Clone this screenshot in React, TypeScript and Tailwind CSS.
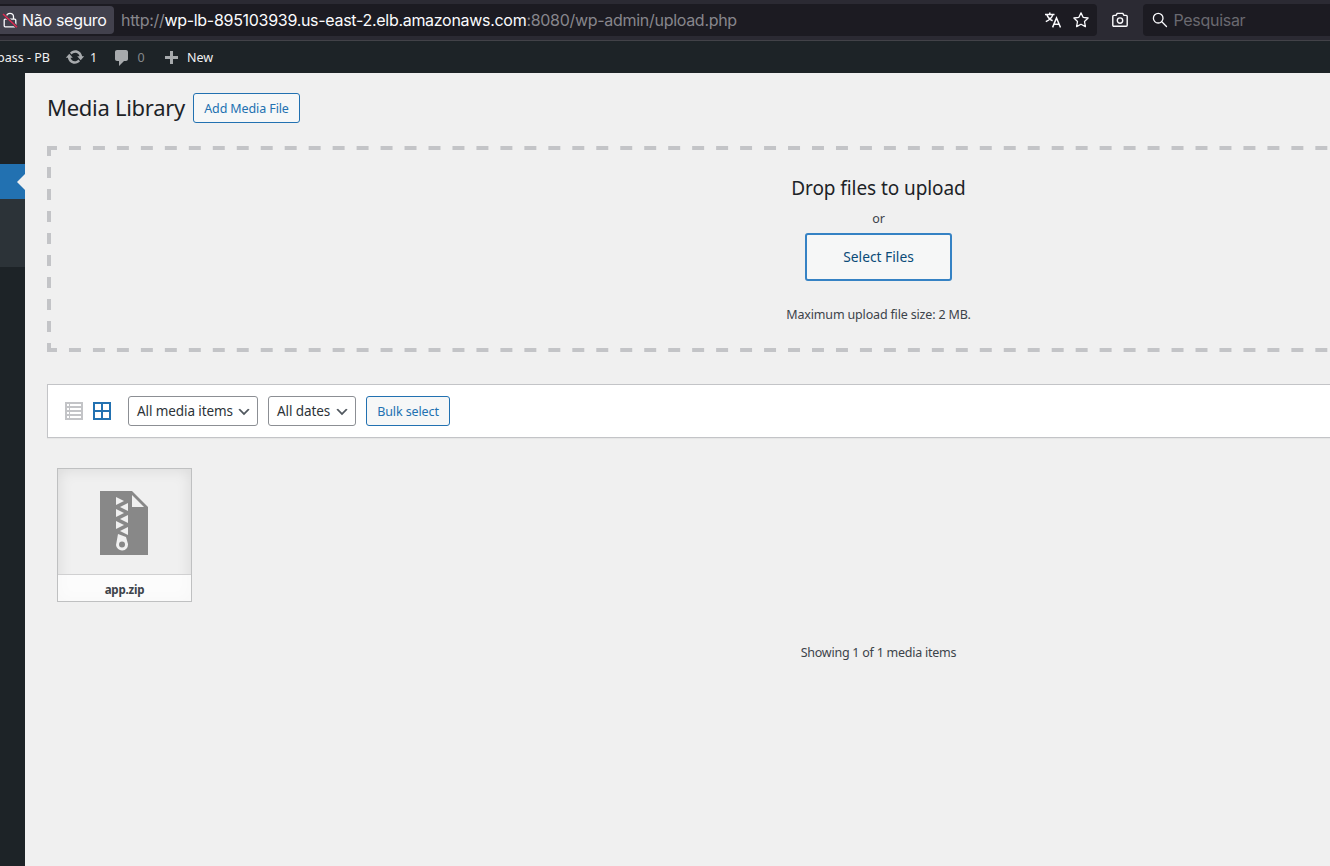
import type { ReactNode } from "react";

function Chevron() {
  return (
    <svg className="mt-[2px] size-4 shrink-0" viewBox="0 0 20 20">
      <path d="M5 6l5 5 5-5 2 1-7 7-7-7 2-1z" fill="#50575e" />
    </svg>
  );
}

function FilterSelect({ label, className }: { label: string; className: string }) {
  return (
    <div className={"flex h-[30px] items-center justify-between rounded-[3px] border border-[#8c8f94] bg-white pr-[5px] pl-2 text-[13.5px] tracking-[-0.09px] text-[#2c3338] " + className}>
      <span className="whitespace-nowrap">{label}</span>
      <Chevron />
    </div>
  );
}

function SecondaryButton({ children, className }: { children: ReactNode; className: string }) {
  return (
    <button className={"flex h-[30px] items-center justify-center rounded-[3px] border border-[#2271b1] bg-[#f6f7f7] pt-[3px] text-[12.5px] tracking-[-0.11px] whitespace-nowrap text-[#2271b1] " + className}>
      {children}
    </button>
  );
}

function BrowserBar() {
  return (
    <div className="flex h-[41px] items-start border-b border-[#424248] bg-[#2b2a33] pt-1 font-[Inter,sans-serif] text-[16px] tracking-[-0.295px]">
      <div className="flex h-8 w-[1097px] items-center rounded-r bg-[#1c1b22] text-[#87868c]">
        <div className="flex h-7 w-[114px] items-center rounded-r bg-[#42414d] text-[#fbfbfe]">
          <svg className="ml-[2px] size-4" viewBox="0 0 16 16" fill="none">
            <path d="M4.5 7V4.8a3.5 3.5 0 0 1 7 0V7M3.2 7.2h9.6a1 1 0 0 1 1 1v5.6a1 1 0 0 1-1 1H3.2a1 1 0 0 1-1-1V8.2a1 1 0 0 1 1-1z" stroke="#fbfbfe" strokeWidth="1.3" />
            <path d="M1 2l14 13.2" stroke="#42414d" strokeWidth="3" />
            <path d="M1 2l14 13.2" stroke="#e22850" strokeWidth="1.4" />
          </svg>
          <span className="ml-1 whitespace-nowrap">Não seguro</span>
        </div>
        <div className="ml-[7px] flex-1 whitespace-nowrap">
          http://<span className="text-[#fbfbfe]">wp-lb-895103939.us-east-2.elb.amazonaws.com</span>:8080/wp-admin/upload.php
        </div>
        <svg className="mr-3 size-4" viewBox="0 0 16 16" fill="none" stroke="#fbfbfe" strokeWidth="1.5">
          <path d="M0 2.4h9.5M4.8.5v2M7.8 2.6C7 5.5 4.2 8 .8 9.6M1.8 2.6C2.7 5.3 5 7.6 7.6 8.8M7.6 15.4L11.5 6l4 9.4M8.8 12.2h5.4" />
        </svg>
        <svg className="mr-2 size-4" viewBox="0 0 16 16" fill="none" stroke="#fbfbfe" strokeWidth="1.3" strokeLinejoin="round">
          <path d="M8 .9l2.1 4.4 5 .7-3.6 3.5.9 5.1L8 12.2l-4.4 2.4.9-5.1L.9 6l5-.7z" />
        </svg>
      </div>
      <div className="flex h-8 w-[46px] items-center justify-center">
        <svg className="size-4" viewBox="0 0 16 16" fill="none" stroke="#fbfbfe" strokeWidth="1.4">
          <path d="M1.8 3.4H4l1.2-2h5.6l1.2 2h2.2a1 1 0 0 1 1 1v8.8a1 1 0 0 1-1 1H1.8a1 1 0 0 1-1-1V4.400a1 1 0 0 1 1-1z" strokeLinejoin="round" />
          <circle cx="8" cy="8.6" r="2.700" />
        </svg>
      </div>
      <div className="flex h-8 flex-1 items-center rounded-l bg-[#1c1b22] pl-[9px] text-[#6a6970]">
        <svg className="mr-[5.5px] size-4" viewBox="0 0 16 16" fill="none" stroke="#fbfbfe" strokeWidth="1.3" strokeLinecap="round">
          <circle cx="6.200" cy="6.200" r="4.800" />
          <path d="M9.800 9.800L14.500 14.500" />
        </svg>
        Pesquisar
      </div>
    </div>
  );
}

function AdminBar() {
  return (
    <div className="flex h-8 items-center bg-[#1d2327] text-[12.5px] whitespace-nowrap text-[#f0f0f1]">
      <div className="flex w-[50px] justify-end pt-[3px]">pass - PB</div>
      <svg className="ml-[15px] size-5" viewBox="0 0 20 20" fill="#a7aaad">
        <path d="M10.200 3.280c3.530 0 6.430 2.610 6.920 6h2.080l-3.500 4-3.500-4h2.320c-.45-1.970-2.210-3.450-4.320-3.450-1.450 0-2.730.71-3.540 1.780L4.950 5.660C6.230 4.200 8.110 3.280 10.200 3.280zm-.4 13.440c-3.520 0-6.430-2.610-6.920-6H.8l3.500-4c1.170 1.330 2.330 2.670 3.500 4H5.480c.45 1.970 2.210 3.450 4.320 3.450 1.450 0 2.730-.71 3.540-1.780l1.710 1.950c-1.280 1.460-3.150 2.380-5.250 2.380z" />
      </svg>
      <span className="ml-[5px] w-[21.500px] pt-[3px]">1</span>
      <svg className="mt-[2px] size-5" viewBox="0 0 20 20" fill="#a7aaad">
        <path d="M5 2h9c1.100 0 2 .9 2 2v7c0 1.100-.9 2-2 2h-2l-5 5v-5H5c-1.100 0-2-.9-2-2V4c0-1.100.9-2 2-2z" />
      </svg>
      <span className="ml-[6px] w-[23px] pt-[3px] text-[#85888b]">0</span>
      <svg className="mt-[3px] size-5" viewBox="0 0 20 20" fill="#a7aaad">
        <path d="M17 7v3h-5v5H9v-5H4V7h5V2h3v5h5z" />
      </svg>
      <span className="ml-[6.500px] pt-[3px]">New</span>
    </div>
  );
}

function SideMenu() {
  return (
    <div className="w-[25px] shrink-0 bg-[#1d2327] pt-[91px]">
      <div className="flex h-[35px] items-center justify-end bg-[#2271b1]">
        <svg className="h-4 w-2" viewBox="0 0 8 16" fill="#f0f0f0">
          <path d="M8 0v16L0 8z" />
        </svg>
      </div>
      <div className="h-[68px] bg-[#2c3338]" />
    </div>
  );
}

const dashH = "h-1 bg-[linear-gradient(to_right,#c3c4c7_12px,transparent_12px)] bg-[length:23.98px_4px] bg-[position:-2px_0]";
const dashV = "w-1 bg-[linear-gradient(to_bottom,#c3c4c7_11px,transparent_11px)] bg-[length:4px_22px] bg-[position:0_-5px]";

function DropZone() {
  return (
    <div className="mt-[23px] flex h-[206px] w-[1662px] flex-col">
      <div className={dashH} />
      <div className="flex flex-1 pr-[3px]">
        <div className={dashV} />
        <div className="flex flex-1 flex-col items-center">
          <h2 className="mt-[24px] text-[19px] leading-7 tracking-[-0.08px] text-[#1d2327]">Drop files to upload</h2>
          <p className="mt-[7px] text-[12.5px] leading-5">or</p>
          <button className="mt-1 h-12 w-[147px] rounded-[3px] border-2 border-[#3582c4] bg-[#f6f7f7] pb-px text-[13.8px] leading-5 text-[#0a4b78]">Select Files</button>
          <p className="mt-[24px] text-[12.5px] leading-5 tracking-[-0.17px]">Maximum upload file size: 2 MB.</p>
        </div>
      </div>
      <div className={dashH} />
    </div>
  );
}

function MediaToolbar() {
  return (
    <div className="mt-8 flex h-[54px] w-[1662px] items-center border border-[#c3c4c7] bg-white pl-[17px] shadow-[0_1px_1px_rgba(0,0,0,0.04)]">
      <svg className="size-[18px]" viewBox="0 0 18 18">
        <path d="M0 0h18v18H0z" fill="#c3c4c7" />
        <path d="M2 2h2v2H2zM5 2h11v2H5zM2 6h2v2H2zM5 6h11v2H5zM2 10h2v2H2zM5 10h11v2H5zM2 14h2v2H2zM5 14h11v2H5z" fill="#fff" />
      </svg>
      <svg className="ml-[10px] size-[18px]" viewBox="0 0 18 18">
        <path d="M0 0h18v18H0z" fill="#2271b1" />
        <path d="M2 2h6v6H2zM10 2h6v6h-6zM2 10h6v6H2zM10 10h6v6h-6z" fill="#fff" />
      </svg>
      <FilterSelect label="All media items" className="ml-[17px] w-[130px]" />
      <FilterSelect label="All dates" className="ml-[10px] w-[88px]" />
      <SecondaryButton className="ml-[10px] w-[84px]">Bulk select</SecondaryButton>
    </div>
  );
}

function Attachment() {
  return (
    <div className="mt-[30px] ml-[10px] flex h-[134px] w-[135px] flex-col border border-[#bfc0c1] shadow-[inset_0_0_15px_rgba(0,0,0,0.1)]">
      <div className="flex flex-1 pt-[22px] pl-[42px]">
        <svg className="h-16 w-12" viewBox="0 0 48 64">
          <path d="M0 0h32l16 16v48H0z" fill="#888" />
          <path d="M32 4v12h12z" fill="#f0f0f0" />
          <path d="M16 6l8 4-8 4zM28 12v8l-8-4zM16 18l8 4-8 4zM28 24v8l-8-4zM16 30l8 4-8 4zM28 36v8l-8-4zM18 43l8 3 2 7a6 6 0 1 1-12 1z" fill="#f0f0f0" />
          <circle cx="22" cy="53.500" r="3" fill="#888" />
        </svg>
      </div>
      <div className="flex h-[27px] shrink-0 items-center justify-center border-t border-[#d0d0d1] bg-white/80 pt-[3px] text-[11.5px] font-bold tracking-[-0.2px] text-[#3c434a]">app.zip</div>
    </div>
  );
}

export default function App() {
  return (
    <div className="flex h-[866px] w-[1330px] flex-col overflow-hidden bg-[#f0f0f0] font-['Noto_Sans',sans-serif] text-[13px] text-[#3c434a]">
      <BrowserBar />
      <AdminBar />
      <div className="flex flex-1">
        <SideMenu />
        <main className="w-[1305px] overflow-hidden pt-5 pl-[22px]">
          <div className="flex h-[30px] items-center">
            <h1 className="w-[138px] pb-[2px] text-[22px] tracking-[-0.28px] whitespace-nowrap text-[#1d2327]">Media Library</h1>
            <SecondaryButton className="ml-2 w-[107px]">Add Media File</SecondaryButton>
          </div>
          <DropZone />
          <MediaToolbar />
          <Attachment />
          <p className="mt-[41px] w-[1663px] text-center text-[12.5px] leading-5 tracking-[-0.24px]">Showing 1 of 1 media items</p>
        </main>
      </div>
    </div>
  );
}
